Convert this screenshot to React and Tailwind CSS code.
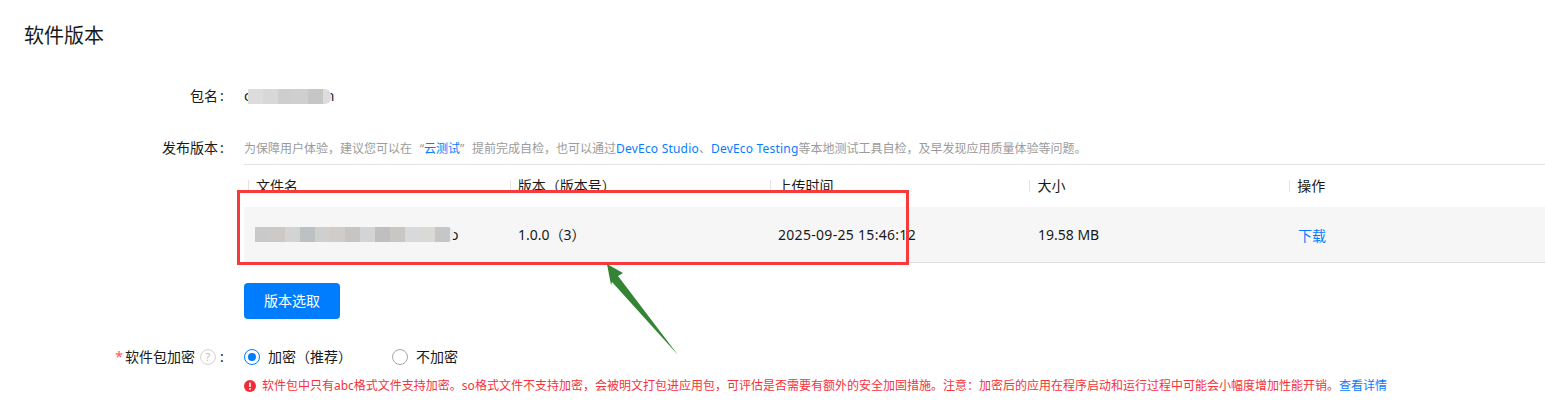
import React from "react";

const columns = [
  { title: "文件名", key: "name" },
  { title: "版本（版本号）", key: "version" },
  { title: "上传时间", key: "time" },
  { title: "大小", key: "size" },
  { title: "操作", key: "action" },
];

// blurred-out text from the screenshot, drawn as mosaic blocks
const Mosaic = ({ colors, className }) => (
  <span className={`relative flex ${className}`}>
    {colors.map((c, i) => (
      <span key={i} className="h-full w-[15px] shrink-0" style={{ backgroundColor: c }} />
    ))}
  </span>
);

const FormRow = ({ label, className, children }) => (
  <div className={`flex ${className}`}>
    <div className="w-[224px] shrink-0 text-right text-[#191919]">{label}</div>
    <div className="ml-5 min-w-0 flex-1">{children}</div>
  </div>
);

const Colon = () => <span className="ml-[2px] inline-block w-1 text-center">:</span>;

export default function App() {
  return (
    <div
      className="relative h-[412px] w-[1545px] overflow-hidden bg-white text-[14px] leading-5 text-[#191919]"
      style={{ fontFamily: '"Noto Sans", "Noto Sans CJK SC", sans-serif' }}
    >
      <div className="pl-6 pt-[22px]">
        <h1 className="text-[20px] leading-7 font-normal">软件版本</h1>
      </div>

      <FormRow label={<>包名<Colon /></>} className="mt-[36px]">
        <div className="flex h-5 items-center">
          <span className="text-[#191919]">c</span>
          <Mosaic
            className="-ml-[3px] h-[15px] w-[83px] overflow-hidden rounded-r-md"
            colors={["#dcdcdc", "#d8d8d8", "#cfcecd", "#cdcfd0", "#c6c6c6", "#dddddd"]}
          />
          <span className="-ml-[5px] text-[#191919]">n</span>
        </div>
      </FormRow>

      <FormRow label={<>发布版本<Colon /></>} className="mt-[32px]">
        <div className="flex h-[27px] items-start border-b border-[#e3e3e3] pt-[2px] text-[12px] leading-[18px] text-[#9b9b9b]">
          为保障用户体验，建议您可以在
          <span className="inline-block w-3 text-right">“</span>
          <span className="text-[#0a7bff]">云测试</span>
          <span className="inline-block w-3 text-left">”</span>
          提前完成自检，也可以通过
          <span className="tracking-[0.2px] text-[#0a7bff]">DevEco Studio</span>、
          <span className="tracking-[0.2px] text-[#0a7bff]">DevEco Testing</span>
          等本地测试工具自检，及早发现应用质量体验等问题。
        </div>
        <div className="flex h-[42px] items-center">
          {columns.map((col) => (
            <div key={col.key} className="w-[260px] pl-1 first:w-[262px]">
              <div className="h-3 border-l border-[#e3e3e3] pl-[7px] leading-3">{col.title}</div>
            </div>
          ))}
        </div>
        <div className="flex h-[56px] items-center border-b border-[#dedede] bg-[#f6f6f6]">
          <div className="flex w-[274px] items-center pl-[11px]">
            <Mosaic
              className="h-[15px] w-[199px] overflow-hidden rounded-r-md"
              colors={["#c9c9c9", "#cdc9c6", "#d3d3d3", "#bcc1c4", "#cfcfcf", "#cfccc9", "#c7c5c2", "#d3d4d6", "#bfbfbf", "#c9c7c4", "#d8d9db", "#dbd9d6", "#c5c6c8", "#eeeeee"]}
            />
            <span className="-ml-[4px]">o</span>
          </div>
          <div className="w-[260px]">1.0.0（3）</div>
          <div className="w-[260px] tracking-[0.3px]">2025-09-25 15:46:12</div>
          <div className="w-[260px]">19.58 MB</div>
          <div className="pt-[3px] text-[#0a7bff]">下载</div>
        </div>
        <button className="mt-5 h-9 w-24 rounded bg-[#007dff] text-white">版本选取</button>
      </FormRow>

      <FormRow
        className="mt-[28px]"
        label={
          <span className="inline-flex items-center">
            <span className="mr-[2px] text-[#f55]">*</span>软件包加密
            <svg viewBox="0 0 16 16" className="ml-[5px] mr-[2px] h-4 w-4">
              <circle cx="8" cy="8" r="7.4" fill="none" stroke="#d0d0d0" strokeWidth="1" />
              <text x="8" y="12" textAnchor="middle" fontSize="11" fill="#bdbdbd">?</text>
            </svg>
            <Colon />
          </span>
        }
      >
        <div className="flex items-center">
          <span className="flex h-4 w-4 items-center justify-center rounded-full border border-[#007dff]">
            <span className="h-2 w-2 rounded-full bg-[#007dff]" />
          </span>
          <span className="ml-2">加密（推荐）</span>
          <span className="ml-[40px] h-4 w-4 rounded-full border border-[#a8a8a8]" />
          <span className="ml-2">不加密</span>
        </div>
        <div className="mt-[10px] flex items-center text-[12px] leading-[18px] text-[#f5323c]">
          <svg viewBox="0 0 12 12" className="mr-[6px] h-3 w-3 shrink-0">
            <circle cx="6" cy="6" r="6" fill="#f02d37" />
            <rect x="5.2" y="2.4" width="1.6" height="4.6" rx="0.6" fill="#fff" />
            <circle cx="6" cy="8.9" r="0.9" fill="#fff" />
          </svg>
          软件包中只有abc格式文件支持加密。so格式文件不支持加密，会被明文打包进应用包，可评估是否需要有额外的安全加固措施。注意：加密后的应用在程序启动和运行过程中可能会小幅度增加性能开销。
          <span className="text-[#0a7bff]">查看详情</span>
        </div>
      </FormRow>

      {/* annotations drawn on top of the screenshot */}
      <div className="absolute left-[237px] top-[190px] h-[75px] w-[672px] border-[3px] border-[#f93a3a]" />
      <svg className="absolute left-[600px] top-[260px]" width="90" height="100" viewBox="0 0 90 100">
        <path d="M7 4 L23 13 L18 16 L78 95 L12 22 L11 25 Z" fill="#338433" />
      </svg>
    </div>
  );
}
